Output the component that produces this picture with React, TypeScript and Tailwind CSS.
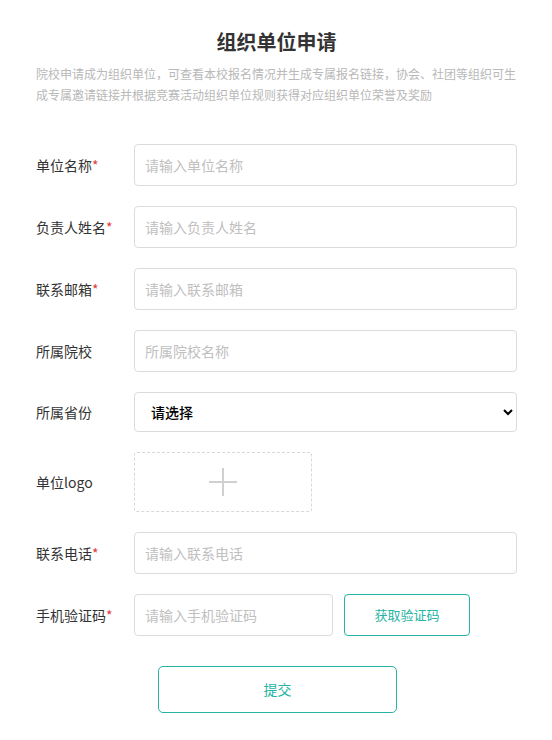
import React from "react";

const FONT = { fontFamily: '"Noto Sans CJK SC", "Noto Sans", sans-serif' };

function Label({ text, required }: { text: string; required?: boolean }) {
  return (
    <div className="w-[98px] shrink-0 text-[14px] text-[#333]">
      {text}
      {required && <span className="text-[#e4393c]">*</span>}
    </div>
  );
}

function InputRow({ label, placeholder, required }: { label: string; placeholder: string; required?: boolean }) {
  return (
    <div className="flex items-center">
      <Label text={label} required={required} />
      <input
        className="h-[42px] flex-1 rounded-[4px] border border-[#dcdcdc] px-[10px] text-[14px] text-[#333] outline-none placeholder:text-[#c0c0c0]"
        placeholder={placeholder}
      />
    </div>
  );
}

export default function App() {
  return (
    <div className="min-h-[740px] w-[552px] bg-white pl-[36px] pr-[35px] pt-[28px]" style={FONT}>
      <h1 className="text-center text-[20px] font-bold leading-[28px] text-[#333]">组织单位申请</h1>
      <p className="mt-[7px] pr-[1px] text-[12px] leading-[21px] text-[#b8b8b8]">
        院校申请成为组织单位，可查看本校报名情况并生成专属报名链接，协会、社团等组织可生成专属邀请链接并根据竞赛活动组织单位规则获得对应组织单位荣誉及奖励
      </p>

      <div className="mt-[39px] flex flex-col gap-[20px]">
        <InputRow label="单位名称" placeholder="请输入单位名称" required />
        <InputRow label="负责人姓名" placeholder="请输入负责人姓名" required />
        <InputRow label="联系邮箱" placeholder="请输入联系邮箱" required />
        <InputRow label="所属院校" placeholder="所属院校名称" />
        <div className="flex items-center">
          <Label text="所属省份" />
          <select
            className="h-[40px] flex-1 rounded-[4px] border border-[#dcdcdc] bg-white pl-[12px] pr-[4px] text-[14px] font-medium text-black outline-none"
            defaultValue=""
          >
            <option value="">请选择</option>
          </select>
        </div>
        <div className="flex items-center">
          <Label text="单位logo" />
          <div className="flex h-[60px] w-[178px] items-center justify-center rounded-[3px] border border-dashed border-[#d8d8d8]">
            <svg width="30" height="30" viewBox="0 0 30 30">
              <path d="M15 1v28M1 15h28" stroke="#d0d0d0" strokeWidth="2" fill="none" />
            </svg>
          </div>
        </div>
        <InputRow label="联系电话" placeholder="请输入联系电话" required />
        <div className="flex items-center">
          <Label text="手机验证码" required />
          <input
            className="h-[42px] w-[199px] rounded-[4px] border border-[#dcdcdc] px-[10px] text-[14px] text-[#333] outline-none placeholder:text-[#c0c0c0]"
            placeholder="请输入手机验证码"
          />
          <button className="ml-[11px] h-[42px] w-[126px] rounded-[4px] border border-[#26b3a3] text-[13px] text-[#26b3a3]">
            获取验证码
          </button>
        </div>
      </div>

      <button className="ml-[122px] mt-[30px] h-[47px] w-[239px] rounded-[5px] border border-[#26b3a3] text-[14px] text-[#26b3a3]">
        提交
      </button>
    </div>
  );
}
